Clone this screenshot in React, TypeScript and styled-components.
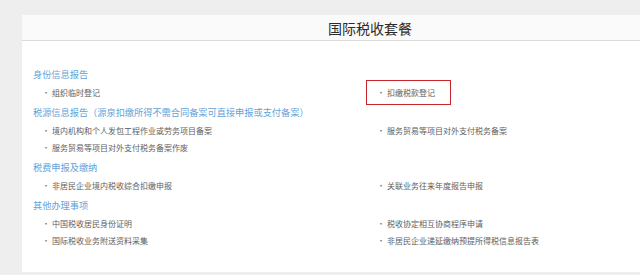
import React from "react";
import styled, { createGlobalStyle } from "styled-components";

const Global = createGlobalStyle`
  html, body { margin: 0; padding: 0; background: #eeeeee; overflow: hidden; }
  body { font-family: "Noto Sans CJK SC", "Noto Sans", sans-serif; }
`;

const Page = styled.div`
  width: 640px;
  height: 275px;
  padding: 15px 0 0 22px;
  box-sizing: border-box;
  overflow: hidden;
`;

const Panel = styled.div`
  width: 696px;
  height: 257px;
  background: #ffffff;
  display: flex;
  flex-direction: column;
`;

const Header = styled.div`
  height: 26px;
  background: #fafafa;
  border-bottom: 1px solid #dcdcdc;
  display: flex;
  align-items: center;
  justify-content: center;
  font-size: 14px;
  color: #2a2a2a;
  padding-top: 1px;
  box-sizing: border-box;
`;

const Body = styled.div`
  padding: 23px 0 0 11px;
  display: flex;
  flex-direction: column;
  gap: 1px;
`;

const Section = styled.div`
  display: flex;
  flex-direction: column;
`;

const Heading = styled.div`
  height: 20px;
  line-height: 20px;
  font-size: 9.2px;
  color: #62a3d9;
  white-space: nowrap;
`;

const Row = styled.div`
  display: grid;
  grid-template-columns: 335px 1fr;
  padding-left: 9px;
  height: 17px;
  align-items: center;
`;

const Item = styled.div<{ $marked?: boolean }>`
  position: relative;
  font-size: 8px;
  line-height: 17px;
  color: #5e5e5e;
  white-space: nowrap;
  &::before {
    content: "·";
    margin-right: 2px;
    color: #777;
  }
  ${(p) =>
    p.$marked &&
    `
    &::after {
      content: "";
      position: absolute;
      left: -11px;
      top: -4px;
      width: 85px;
      height: 25px;
      box-sizing: border-box;
      border: 1.5px solid #c9252c;
    }
  `}
`;

type RowData = [string, string?, boolean?];

const sections: { title: string; rows: RowData[] }[] = [
  { title: "身份信息报告", rows: [["组织临时登记", "扣缴税款登记", true]] },
  {
    title: "税源信息报告（源泉扣缴所得不需合同备案可直接申报或支付备案）",
    rows: [
      ["境内机构和个人发包工程作业或劳务项目备案", "服务贸易等项目对外支付税务备案"],
      ["服务贸易等项目对外支付税务备案作废"],
    ],
  },
  {
    title: "税费申报及缴纳",
    rows: [["非居民企业境内税收综合扣缴申报", "关联业务往来年度报告申报"]],
  },
  {
    title: "其他办理事项",
    rows: [
      ["中国税收居民身份证明", "税收协定相互协商程序申请"],
      ["国际税收业务附送资料采集", "非居民企业递延缴纳预提所得税信息报告表"],
    ],
  },
];

export default function App() {
  return (
    <>
      <Global />
      <Page>
        <Panel>
          <Header>国际税收套餐</Header>
          <Body>
            {sections.map((s) => (
              <Section key={s.title}>
                <Heading>{s.title}</Heading>
                {s.rows.map(([a, b, marked], i) => (
                  <Row key={i}>
                    <Item>{a}</Item>
                    {b ? <Item $marked={marked}>{b}</Item> : <span />}
                  </Row>
                ))}
              </Section>
            ))}
          </Body>
        </Panel>
      </Page>
    </>
  );
}
